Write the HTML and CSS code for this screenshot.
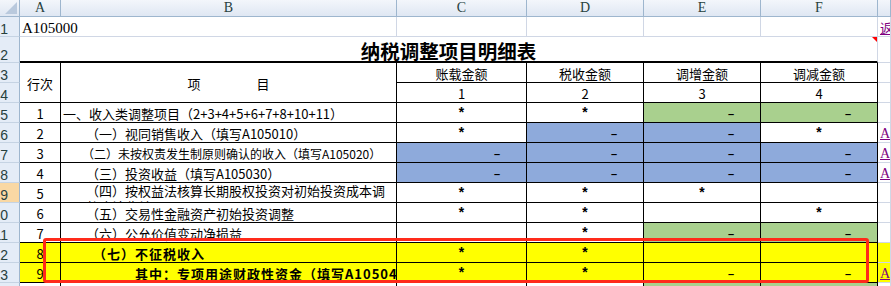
FILE: index.html
```html
<!DOCTYPE html>
<html lang="zh-CN">
<head>
    <meta charset="UTF-8">
    <title>A105000 纳税调整项目明细表</title>
    <link rel="stylesheet" href="styles.css">
</head>
<body>
    <div class="sheet">
        <!-- column headers -->
        <div class="corner"></div>
        <div class="colhead">A</div>
        <div class="colhead">B</div>
        <div class="colhead">C</div>
        <div class="colhead">D</div>
        <div class="colhead">E</div>
        <div class="colhead">F</div>
        <div class="colhead"></div>

        <!-- row 1 -->
        <div class="rowhead">1</div>
        <div class="cell code span2">A105000</div>
        <div class="cell"></div>
        <div class="cell"></div>
        <div class="cell"></div>
        <div class="cell"></div>
        <div class="cell link cjk">返回</div>

        <!-- row 2 -->
        <div class="rowhead">2</div>
        <div class="cell title">纳税调整项目明细表</div>
        <div class="cell"></div>

        <!-- row 3 / 4 -->
        <div class="rowhead">3</div>
        <div class="cell f c tall">行次</div>
        <div class="cell f c tall item"><span>项</span><span>目</span></div>
        <div class="cell f c">账载金额</div>
        <div class="cell f c">税收金额</div>
        <div class="cell f c">调增金额</div>
        <div class="cell f c">调减金额</div>
        <div class="cell"></div>

        <div class="rowhead">4</div>
        <div class="cell f c">1</div>
        <div class="cell f c">2</div>
        <div class="cell f c">3</div>
        <div class="cell f c">4</div>
        <div class="cell"></div>

        <!-- row 5 -->
        <div class="rowhead">5</div>
        <div class="cell f c">1</div>
        <div class="cell f">一、收入类调整项目（2+3+4+5+6+7+8+10+11）</div>
        <div class="cell f c"><span class="star">*</span></div>
        <div class="cell f c"><span class="star">*</span></div>
        <div class="cell f r green"><span class="dash">–</span></div>
        <div class="cell f r green"><span class="dash">–</span></div>
        <div class="cell"></div>

        <!-- row 6 -->
        <div class="rowhead">6</div>
        <div class="cell f c">2</div>
        <div class="cell f ind">（一）视同销售收入（填写A105010）</div>
        <div class="cell f c"><span class="star">*</span></div>
        <div class="cell f r blue"><span class="dash">–</span></div>
        <div class="cell f r blue"><span class="dash">–</span></div>
        <div class="cell f c"><span class="star">*</span></div>
        <div class="cell link">A105010</div>

        <!-- row 7 -->
        <div class="rowhead">7</div>
        <div class="cell f c">3</div>
        <div class="cell f ind small">（二）未按权责发生制原则确认的收入（填写A105020）</div>
        <div class="cell f r blue"><span class="dash">–</span></div>
        <div class="cell f r blue"><span class="dash">–</span></div>
        <div class="cell f r blue"><span class="dash">–</span></div>
        <div class="cell f r blue"><span class="dash">–</span></div>
        <div class="cell link">A105020</div>

        <!-- row 8 -->
        <div class="rowhead">8</div>
        <div class="cell f c">4</div>
        <div class="cell f ind">（三）投资收益（填写A105030）</div>
        <div class="cell f r blue"><span class="dash">–</span></div>
        <div class="cell f r blue"><span class="dash">–</span></div>
        <div class="cell f r blue"><span class="dash">–</span></div>
        <div class="cell f r blue"><span class="dash">–</span></div>
        <div class="cell link">A105030</div>

        <!-- row 9 -->
        <div class="rowhead sel">9</div>
        <div class="cell f c">5</div>
        <div class="cell f ind wrap">（四）按权益法核算长期股权投资对初始投资成本调整确认收益</div>
        <div class="cell f c"><span class="star">*</span></div>
        <div class="cell f c"><span class="star">*</span></div>
        <div class="cell f c"><span class="star">*</span></div>
        <div class="cell f"></div>
        <div class="cell"></div>

        <!-- row 10 -->
        <div class="rowhead">10</div>
        <div class="cell f c">6</div>
        <div class="cell f ind">（五）交易性金融资产初始投资调整</div>
        <div class="cell f c"><span class="star">*</span></div>
        <div class="cell f c"><span class="star">*</span></div>
        <div class="cell f"></div>
        <div class="cell f c"><span class="star">*</span></div>
        <div class="cell"></div>

        <!-- row 11 -->
        <div class="rowhead">11</div>
        <div class="cell f c">7</div>
        <div class="cell f ind">（六）公允价值变动净损益</div>
        <div class="cell f"></div>
        <div class="cell f c"><span class="star">*</span></div>
        <div class="cell f r green"><span class="dash">–</span></div>
        <div class="cell f r green"><span class="dash">–</span></div>
        <div class="cell"></div>

        <!-- row 12 -->
        <div class="rowhead">12</div>
        <div class="cell f c yellow">8</div>
        <div class="cell f yellow bold ind2">（七）不征税收入</div>
        <div class="cell f c yellow"><span class="star">*</span></div>
        <div class="cell f c yellow"><span class="star">*</span></div>
        <div class="cell f yellow"></div>
        <div class="cell f yellow"></div>
        <div class="cell yellow"></div>

        <!-- row 13 -->
        <div class="rowhead">13</div>
        <div class="cell f c yellow">9</div>
        <div class="cell f yellow bold ind3">其中：专项用途财政性资金（填写A105040）</div>
        <div class="cell f c yellow"><span class="star">*</span></div>
        <div class="cell f c yellow"><span class="star">*</span></div>
        <div class="cell f r yellow"><span class="dash">–</span></div>
        <div class="cell f r yellow"><span class="dash">–</span></div>
        <div class="cell link yellow">A105040</div>

        <!-- row 14 -->
        <div class="rowhead">14</div>
        <div class="cell f c">10</div>
        <div class="cell f"></div>
        <div class="cell f"></div>
        <div class="cell f"></div>
        <div class="cell f green"></div>
        <div class="cell f green"></div>
        <div class="cell"></div>

        <!-- red highlight frame drawn over rows 12-13 -->
        <div class="mark"></div>
    </div>
</body>
</html>
```

FILE: styles.css
```css
html, body {
    margin: 0;
    background: #fff;
    overflow: hidden;
}

body {
    font-family: "Noto Sans CJK SC", sans-serif;
    font-size: 13px;
    color: #000;
}

.sheet {
    position: relative;
    display: grid;
    grid-template-columns: 20px 41px 336px 130px 117px 117px 117px 1fr;
    grid-template-rows: 17px 20px 26px repeat(12, 20px);
}

.sheet > div {
    box-sizing: border-box;
}

/* headers */
.corner {
    position: relative;
    background: linear-gradient(#f3f6fb, #dfe7f3);
    border-right: 1px solid #9eb6ce;
    border-bottom: 1px solid #9eb6ce;
}

.corner::after {
    content: "";
    position: absolute;
    right: 2px;
    bottom: 2px;
    border-bottom: 12px solid #b9c9dd;
    border-left: 12px solid transparent;
}

.colhead {
    display: flex;
    align-items: center;
    justify-content: center;
    background: linear-gradient(#f3f6fb, #dfe7f3);
    border-right: 1px solid #9eb6ce;
    border-bottom: 1px solid #9eb6ce;
    font-family: "Liberation Serif", serif;
    font-size: 14px;
    color: #27413e;
}

.rowhead {
    display: flex;
    align-items: flex-end;
    justify-content: flex-end;
    padding-right: 11px;
    overflow: hidden;
    background: #e4ecf7;
    border-right: 1px solid #9eb6ce;
    border-bottom: 1px solid #c5d3e3;
    font-family: "Liberation Sans", sans-serif;
    font-size: 14px;
    line-height: 14px;
    color: #27413e;
}

.rowhead.sel {
    background: #f9d8a4;
}

/* cells */
.cell {
    display: flex;
    align-items: center;
    padding: 2px 2px 0;
    overflow: hidden;
    white-space: nowrap;
    border-right: 1px solid #d0d7e5;
    border-bottom: 1px solid #d0d7e5;
}

.cell.f {
    border-right-color: #000;
    border-bottom-color: #000;
}

.c {
    justify-content: center;
}

.r {
    justify-content: flex-end;
    padding-right: 26px;
}

.span2 {
    grid-column: span 2;
}

.tall {
    grid-row: span 2;
}

.item {
    gap: 56px;
}

.code {
    font-family: "Liberation Serif", serif;
    font-size: 15px;
    padding-top: 4px;
}

.title {
    position: relative;
    grid-column: span 6;
    justify-content: center;
    font-size: 19.5px;
    font-weight: bold;
    border-bottom: 2px solid #000;
}

/* comment marker */
.title::after {
    content: "";
    position: absolute;
    top: 0;
    right: 0;
    border-top: 5px solid #f00;
    border-left: 5px solid transparent;
}

.ind {
    padding-left: 25px;
}

.ind2 {
    padding-left: 32px;
}

.ind3 {
    padding-left: 74px;
}

.small {
    font-size: 12px;
    padding-left: 21px;
}

.wrap {
    align-items: flex-start;
    white-space: normal;
    line-height: 16px;
    padding-top: 0;
    font-size: 13px;
}

.bold {
    font-weight: bold;
    letter-spacing: 1px;
}

.star {
    font-family: "Liberation Mono", monospace;
    font-weight: bold;
    font-size: 14px;
    vertical-align: -4px;
}

.dash {
    font-family: "Liberation Sans", sans-serif;
    font-weight: bold;
    font-size: 11px;
}

.link {
    color: #800080;
    text-decoration: underline;
    font-family: "Liberation Serif", serif;
    font-size: 14px;
    padding-left: 2px;
}

.link.cjk {
    font-family: "Noto Sans CJK SC", sans-serif;
    font-size: 13px;
}

/* fills */
.blue {
    background: #8eaadb;
}

.green {
    background: #a9d08e;
}

.yellow {
    background: #ffff00;
}

.mark {
    position: absolute;
    left: 43px;
    top: 238px;
    width: 826px;
    height: 45px;
    border: 3px solid #ff2a1a;
    border-radius: 3px;
}
```
